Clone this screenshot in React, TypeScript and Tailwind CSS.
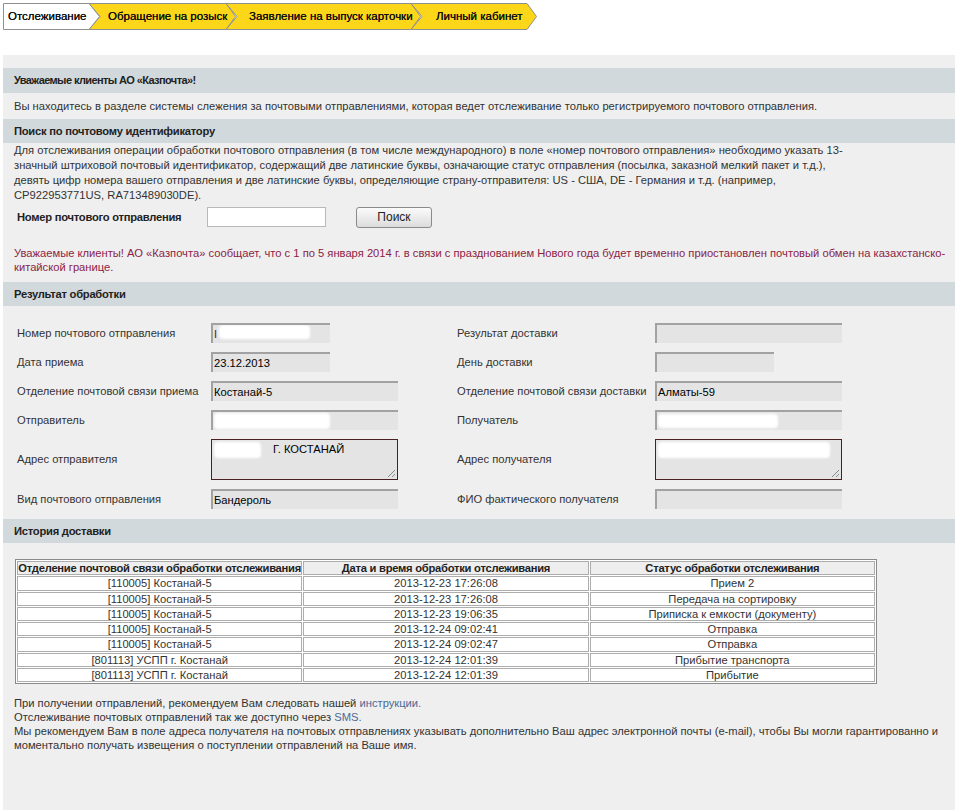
import React from 'react';
import clsx from 'clsx';

const tabs = [
  { label: 'Отслеживание', w: 97, base: 86, pl: 5, ml: 0, first: true },
  { label: 'Обращение на розыск', w: 147, base: 137, pl: 19, ml: -11, first: false },
  { label: 'Заявление на выпуск карточки', w: 195, base: 185, pl: 23, ml: -10, first: false },
  { label: 'Личный кабинет', w: 126, base: 116, pl: 25, ml: -10, first: false },
];

function Tabs() {
  return <div className="flex h-[27px]">
      {tabs.map((t, i) => {
        const pts = t.first
          ? `0.5,0.5 ${t.base},0.5 ${t.w - 0.5},13.5 ${t.base},26.5 0.5,26.5`
          : `0,0.5 ${t.base},0.5 ${t.w - 0.5},13.5 ${t.base},26.5 0,26.5 11,13.5`;
        return <div key={t.label} className="relative flex items-center" style={{ width: t.w, marginLeft: t.ml, paddingLeft: t.pl, zIndex: 10 - i }}>
            <svg className="absolute inset-0" width={t.w} height={27}>
              <polygon points={pts} fill={t.first ? '#ffffff' : '#fcd619'} stroke="#8f8f8f" strokeWidth="1" />
            </svg>
            <span className="relative whitespace-nowrap text-[11.5px] text-[#111] [text-shadow:0_0_0.4px_#111]">{t.label}</span>
          </div>;
      })}
    </div>;
}

function Bar({ children, tall }: { children: React.ReactNode; tall?: boolean }) {
  return <div className={clsx('flex items-center bg-[#d1d9dc] pl-[11px] font-bold tracking-[-0.25px] text-[#222]', tall ? 'h-[25px]' : 'h-[24px]')}>
      {children}
    </div>;
}

function Blob({ w, h = 14 }: { w: number; h?: number }) {
  return <span className="inline-block rounded-sm bg-white blur-[1px]" style={{ width: w, height: h }} />;
}

function Field({ w, children }: { w: string; children?: React.ReactNode }) {
  return <div className={clsx('flex h-5 items-center overflow-hidden border-t-2 border-l-2 border-[#a2a2a2] bg-[#e4e4e4] pl-px text-black', w)}>
      {children}
    </div>;
}

function Area({ children }: { children?: React.ReactNode }) {
  return <div className="relative h-[41px] w-[187px] border border-[#4b2020] bg-[#e4e4e4] text-black">
      <div className="flex items-start pl-[2px] pt-px">{children}</div>
      <svg className="absolute bottom-[2px] right-[2px]" width="8" height="8" viewBox="0 0 8 8">
        <line x1="1" y1="8" x2="8" y2="1" stroke="#888" strokeWidth="1" />
        <line x1="5" y1="8" x2="8" y2="5" stroke="#888" strokeWidth="1" />
      </svg>
    </div>;
}

const history = [
  ['[110005] Костанай-5', '2013-12-23 17:26:08', 'Прием 2'],
  ['[110005] Костанай-5', '2013-12-23 17:26:08', 'Передача на сортировку'],
  ['[110005] Костанай-5', '2013-12-23 19:06:35', 'Приписка к емкости (документу)'],
  ['[110005] Костанай-5', '2013-12-24 09:02:41', 'Отправка'],
  ['[110005] Костанай-5', '2013-12-24 09:02:47', 'Отправка'],
  ['[801113] УСПП г. Костанай', '2013-12-24 12:01:39', 'Прибытие транспорта'],
  ['[801113] УСПП г. Костанай', '2013-12-24 12:01:39', 'Прибытие'],
];

export default function App() {
  return <div className="min-h-[810px] bg-white pl-[3px] pt-[3px] font-['Liberation_Sans',Arial,sans-serif] text-[11.2px] text-[#333]">
      <Tabs />
      <div className="mt-[25px] min-h-[755px] w-[952px] bg-[#efefef] pt-[13px]">
        <Bar tall><span className="text-[11px] tracking-[-0.6px]">Уважаемые клиенты АО «Казпочта»!</span></Bar>
        <div className="flex h-[26px] items-center pl-[11px]">
          Вы находитесь в разделе системы слежения за почтовыми отправлениями, которая ведет отслеживание только регистрируемого почтового отправления.
        </div>
        <Bar>Поиск по почтовому идентификатору</Bar>
        <p className="pl-[11px] leading-[15px]">
          Для отслеживания операции обработки почтового отправления (в том числе международного) в поле «номер почтового отправления» необходимо указать 13-<br />
          значный штриховой почтовый идентификатор, содержащий две латинские буквы, означающие статус отправления (посылка, заказной мелкий пакет и т.д.),<br />
          девять цифр номера вашего отправления и две латинские буквы, определяющие страну-отправителя: US - США, DE - Германия и т.д. (например,<br />
          CP922953771US, RA713489030DE).
        </p>
        <div className="mt-[4px] flex h-[20px] items-center pl-[14px]">
          <span className="w-[190px] font-bold tracking-[-0.25px] text-[#222]">Номер почтового отправления</span>
          <input className="h-[20px] w-[119px] border border-[#b9b9b9] bg-white outline-none" />
          <button className="ml-[30px] h-[21px] w-[76px] rounded-[3px] border border-[#8a8a8a] bg-gradient-to-b from-[#fbfbfb] to-[#dcdcdc] text-[12px] text-[#222]">Поиск</button>
        </div>
        <p className="mt-[19px] mb-[8px] pl-[11px] leading-[14px] text-[#8b2346]">
          Уважаемые клиенты! АО «Казпочта» сообщает, что с 1 по 5 января 2014 г. в связи с празднованием Нового года будет временно приостановлен почтовый обмен на казахстанско-<br />
          китайской границе.
        </p>
        <Bar>Результат обработки</Bar>
        <div className="grid grid-cols-[194px_246px_198px_1fr] items-center gap-y-[9px] pt-[17px] pb-[10px] pl-[14px]">
          <span>Номер почтового отправления</span>
          <Field w="w-[119px]"><span className="text-[#5a2020]">I</span><span className="ml-[2px]"><Blob w={91} /></span></Field>
          <span>Результат доставки</span>
          <Field w="w-[187px]" />

          <span>Дата приема</span>
          <Field w="w-[119px]">23.12.2013</Field>
          <span>День доставки</span>
          <Field w="w-[119px]" />

          <span>Отделение почтовой связи приема</span>
          <Field w="w-[187px]">Костанай-5</Field>
          <span>Отделение почтовой связи доставки</span>
          <Field w="w-[187px]">Алматы-59</Field>

          <span>Отправитель</span>
          <Field w="w-[187px]"><Blob w={116} h={16} /></Field>
          <span>Получатель</span>
          <Field w="w-[187px]"><Blob w={120} h={14} /></Field>

          <span>Адрес отправителя</span>
          <Area><span className="mt-px"><Blob w={47} h={16} /></span><span className="ml-[12px]">Г. КОСТАНАЙ</span></Area>
          <span>Адрес получателя</span>
          <Area><span className="mt-px"><Blob w={172} h={16} /></span></Area>

          <span>Вид почтового отправления</span>
          <Field w="w-[187px]">Бандероль</Field>
          <span>ФИО фактического получателя</span>
          <Field w="w-[187px]" />
        </div>
        <Bar>История доставки</Bar>
        <div className="pt-[16px] pl-[12px]">
          <table className="w-[862px] table-fixed border-separate border-spacing-[1px] border border-[#8a8a8a] bg-white leading-[12.3px]">
            <thead>
              <tr>
                {['Отделение почтовой связи обработки отслеживания', 'Дата и время обработки отслеживания', 'Статус обработки отслеживания'].map(h => <th key={h} className="whitespace-nowrap border border-[#adadad] bg-[#eeeeee] p-0 font-bold tracking-[-0.25px] text-[#222]">{h}</th>)}
              </tr>
            </thead>
            <tbody>
              {history.map((r, i) => <tr key={i}>
                  {r.map((c, j) => <td key={j} className="border border-[#adadad] p-0 text-center">{c}</td>)}
                </tr>)}
            </tbody>
          </table>
        </div>
        <div className="mt-[12px] pl-[11px] leading-[14px]">
          <p>При получении отправлений, рекомендуем Вам следовать нашей <a className="text-[#4b6a96]">инструкции.</a></p>
          <p>Отслеживание почтовых отправлений так же доступно через <a className="text-[#4b6a96]">SMS.</a></p>
          <p>Мы рекомендуем Вам в поле адреса получателя на почтовых отправлениях указывать дополнительно Ваш адрес электронной почты (e-mail), чтобы Вы могли гарантированно и<br />моментально получать извещения о поступлении отправлений на Ваше имя.</p>
        </div>
      </div>
    </div>;
}
